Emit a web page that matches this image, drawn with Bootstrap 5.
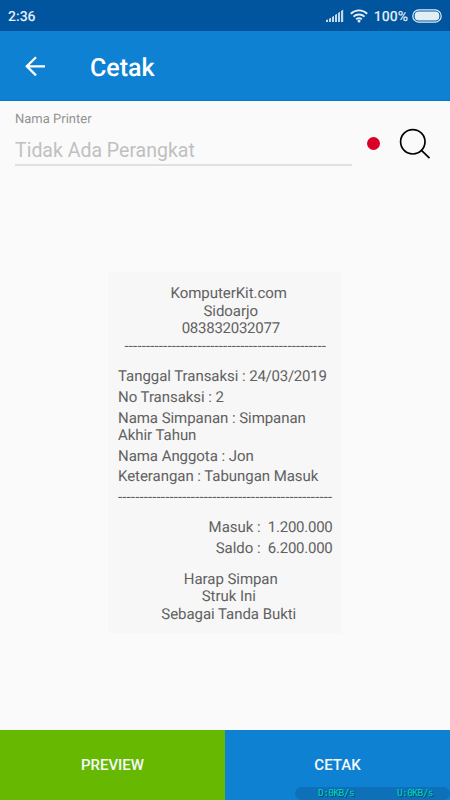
<!DOCTYPE html>
<html lang="id">
<head>
<meta charset="utf-8">
<meta name="viewport" content="width=device-width, initial-scale=1">
<title>Cetak</title>
<link href="https://cdn.jsdelivr.net/npm/bootstrap@5.3.0/dist/css/bootstrap.min.css" rel="stylesheet">
<style>
body{font-family:Roboto,"Liberation Sans",sans-serif;background:#fafafa;height:800px;overflow:hidden;text-rendering:geometricPrecision}
.status-bar{height:31px;background:#00559e;color:#e3edf6;font-size:14px;font-weight:500;padding:3px 8px 0}
.status-bar svg{margin-bottom:3px}
.wifi{margin:0 6px}
.app-bar{height:70px;background:#0f81d2;border-bottom:1px solid #0878cd;padding:0 25px}
.app-title{font-size:25px;font-weight:500;line-height:30px;margin:6px 0 0 44px}
.printer-row{padding:10px 19px 0 15px}
.printer-field{width:337px;margin-right:1px}
.printer-field label{font-size:13px;line-height:16px;color:#929292;display:block;padding-top:1px}
.printer-field input{font-size:19.5px;line-height:24px;height:38px;padding:8px 0 0;border-bottom:2px solid #e0e0e0!important}
.printer-field input::placeholder{color:#c0c0c0;opacity:1}
.status-dot{width:13px;height:13px;background:#db0027;margin:26px 0 0 14px}
.search-btn{margin:17px 0 0 19px;line-height:0}
.receipt{width:234px;height:361px;background:#f7f7f7;color:#616161;font-size:15px;line-height:17.5px;letter-spacing:-.05px;padding:13px 9.5px 0 10px;margin-top:106px}
.receipt p{margin:0 0 3.1px}
.nudge{padding-left:7px}
.nudge-wide{padding-left:11px}
.digits{letter-spacing:-.25px}
.rule-text{white-space:nowrap;letter-spacing:.14px}
.detail{margin-top:13.4px}
.totals{margin-top:13px}
.closing{margin-top:13.3px}
.action{height:70px;font-size:15px;font-weight:500;color:#f5f9fc;padding-top:7px}
.preview{background:#66b800}
.print{background:#0f81d2}
.net-meter{right:0;bottom:0;width:155px;height:13px;background:#0e70b8;color:#00d8b8;font:9.600px/14px "DejaVu Sans Mono",monospace;letter-spacing:-.62px;padding:0 17px 0 23px;text-shadow:1px 1px 0 #06466f}
</style>
<script src="https://cdn.jsdelivr.net/npm/bootstrap@5.3.0/dist/js/bootstrap.bundle.min.js"></script>
</head>
<body class="d-flex flex-column position-relative">
<div class="status-bar d-flex align-items-center justify-content-between flex-shrink-0">
  <span>2:36</span>
  <div class="d-flex align-items-center">
    <svg width="18" height="14" viewBox="0 0 18 14" fill="#c3d8ea"><path d="M0 13V11l2-.6V13zM3 13V9.700l2-.9V13zM6 13V7.900L8 6.700V13zM9 13V6l2-1.200V13zM12 13V4l2-1.300V13zM15 13V2l2.200-1.500V13z"/></svg>
    <svg class="wifi" width="18" height="14" viewBox="0 0 18 14" fill="none" stroke="#e3edf6" stroke-width="1.900"><path d="M.8 4.700C5.500.2 12.500.2 17.200 4.700M3.500 7.600c3-2.900 8-2.900 11 0M6.200 10.300c1.500-1.500 4.100-1.500 5.600 0"/><circle cx="9" cy="12" r="1.500" fill="#e3edf6" stroke="none"/></svg>
    <span class="me-1">100%</span>
    <svg width="30" height="14" viewBox="0 0 30 14"><rect x=".8" y=".8" width="28.400" height="12.400" rx="6.200" fill="none" stroke="#e3edf6" stroke-width="1.200"/><rect x="2.700" y="2.600" width="24.600" height="8.800" rx="4" fill="#e3edf6"/></svg>
  </div>
</div>
<header class="app-bar d-flex align-items-center flex-shrink-0">
  <svg width="21" height="20" viewBox="0 0 21 20" fill="none" stroke="#fff" stroke-width="2.300"><path d="M20 10.300H2M11 1.200l-9.200 9.100 9.200 9.100"/></svg>
  <h1 class="app-title text-white">Cetak</h1>
</header>
<main class="flex-grow-1 d-flex flex-column align-items-center">
  <div class="printer-row d-flex align-items-start w-100">
    <div class="printer-field">
      <label for="printer">Nama Printer</label>
      <input id="printer" class="w-100 border-0 bg-transparent d-block" placeholder="Tidak Ada Perangkat">
    </div>
    <span class="status-dot rounded-circle"></span>
    <button class="search-btn btn p-0 border-0" aria-label="Cari"><svg width="32" height="32" viewBox="0 0 32 32" fill="none" stroke="#000" stroke-width="1.700"><circle cx="13.800" cy="13.800" r="12.200"/><path d="M22.200 22.200l8.300 8"/></svg></button>
  </div>
  <section class="receipt">
    <div class="text-center">
      <div class="nudge">KomputerKit.com</div>
      <div class="nudge-wide">Sidoarjo</div>
      <div class="nudge-wide digits">083832032077</div>
      <div class="rule-text">-----------------------------------------------</div>
    </div>
    <div class="detail">
      <p>Tanggal Transaksi : <span class="digits">24/03/2019</span></p>
      <p>No Transaksi : 2</p>
      <p>Nama Simpanan : Simpanan<br>Akhir Tahun</p>
      <p>Nama Anggota : Jon</p>
      <p>Keterangan : Tabungan Masuk</p>
      <p class="rule-text">--------------------------------------------------</p>
    </div>
    <div class="totals text-end">
      <p>Masuk :&nbsp; <span class="digits">1.200.000</span></p>
      <p>Saldo :&nbsp; <span class="digits">6.200.000</span></p>
    </div>
    <div class="closing text-center">
      <div class="nudge-wide">Harap Simpan</div>
      <div class="nudge">Struk Ini</div>
      <div class="nudge">Sebagai Tanda Bukti</div>
    </div>
  </section>
</main>
<footer class="d-flex flex-shrink-0">
  <button class="action preview btn rounded-0 border-0 w-50">PREVIEW</button>
  <button class="action print btn rounded-0 border-0 w-50">CETAK</button>
</footer>
<div class="net-meter position-absolute rounded-pill d-flex justify-content-between"><span>D:0KB/s</span><span>U:0KB/s</span></div>
</body>
</html>
